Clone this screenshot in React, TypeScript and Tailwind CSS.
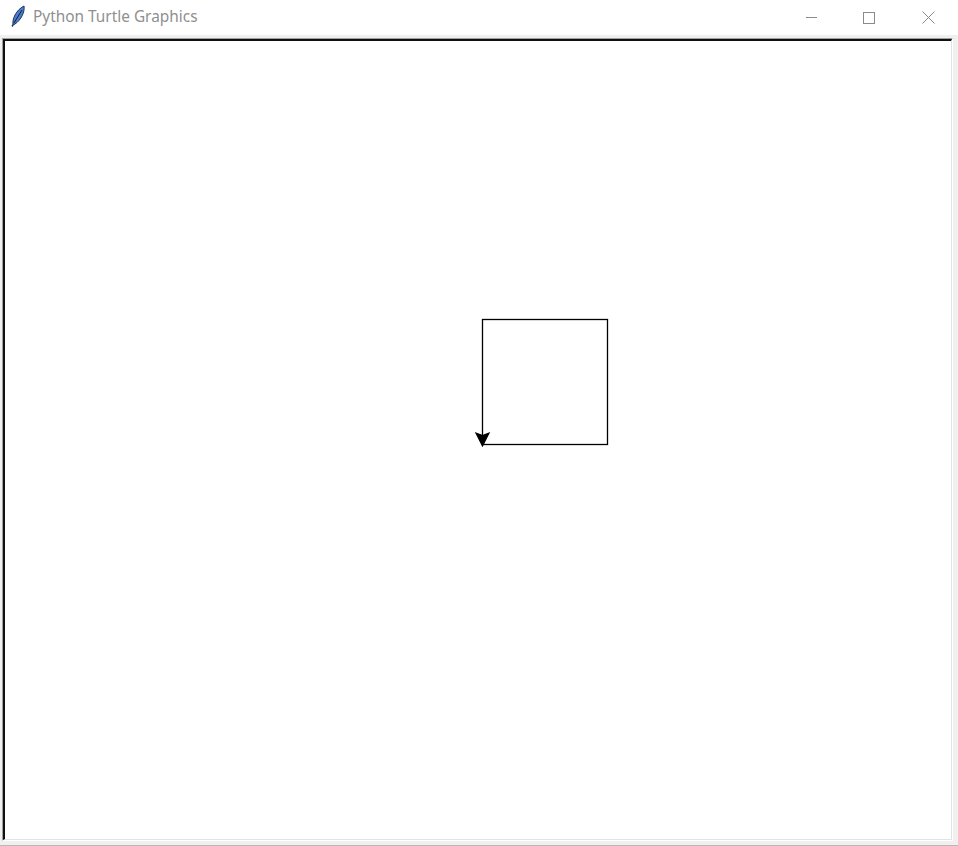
import React from "react";

function Feather() {
  return (
    <svg width="16" height="22" viewBox="0 0 16 22">
      <path d="M3 20 C 2 14, 6 5, 14 1 C 15 7, 11 15, 5 19 Z" fill="#4a7fd0" stroke="#1c2f55" strokeWidth="1" />
      <path d="M4 18 L 12 5" stroke="#0d1a33" strokeWidth="1" />
      <path d="M3 20 L 2 21.5" stroke="#1c2f55" strokeWidth="1.4" />
    </svg>
  );
}

export default function App() {
  return (
    <div
      className="w-[958px] h-[846px] bg-white flex flex-col overflow-hidden"
      style={{ fontFamily: '"Noto Sans", "Open Sans", sans-serif' }}
    >
      <div className="h-[35px] flex items-center bg-white shrink-0">
        <div className="w-[33px] flex justify-center items-center pl-[2px] pb-[4px]">
          <Feather />
        </div>
        <span className="text-[15.4px] text-[#8f8f8f] leading-none pb-[1px]">Python Turtle Graphics</span>
        <div className="flex-1" />
        <div className="w-[58px] h-[30px] flex items-center justify-center">
          <div className="w-[11px] h-px bg-[#8a8a8a]" />
        </div>
        <div className="w-[58px] h-[30px] flex items-center justify-center">
          <div className="w-[12px] h-[12px] border border-[#8a8a8a]" />
        </div>
        <div className="w-[60px] h-[30px] flex items-center justify-center">
          <svg width="13" height="13" viewBox="0 0 13 13">
            <path d="M0.5 0.5 L12.5 12.5 M12.5 0.5 L0.5 12.5" stroke="#8a8a8a" strokeWidth="1" />
          </svg>
        </div>
      </div>
      <div className="flex-1 bg-[#f0f0f0] pl-[2px] pt-[3px] pr-[5px] pb-[4px] flex flex-col border-b border-[#b8b8b8]">
        <div className="flex-1 flex flex-col border-t border-l border-t-[#a0a0a0] border-l-[#a0a0a0] border-b border-r border-b-white border-r-white">
          <div className="flex-1 relative bg-white border-t-2 border-l-2 border-t-[#101010] border-l-[#101010] border-b border-r border-b-[#e3e3e3] border-r-[#e3e3e3]">
            <svg className="absolute left-0 top-0" width="948" height="800">
              <rect x="477.5" y="278.5" width="125" height="125" fill="none" stroke="#000" strokeWidth="1.3" />
              <polygon points="477.5,405 471,392 477.5,394.5 484,392" fill="#000" stroke="#000" strokeWidth="1.2" strokeLinejoin="miter" />
            </svg>
          </div>
        </div>
      </div>
    </div>
  );
}
